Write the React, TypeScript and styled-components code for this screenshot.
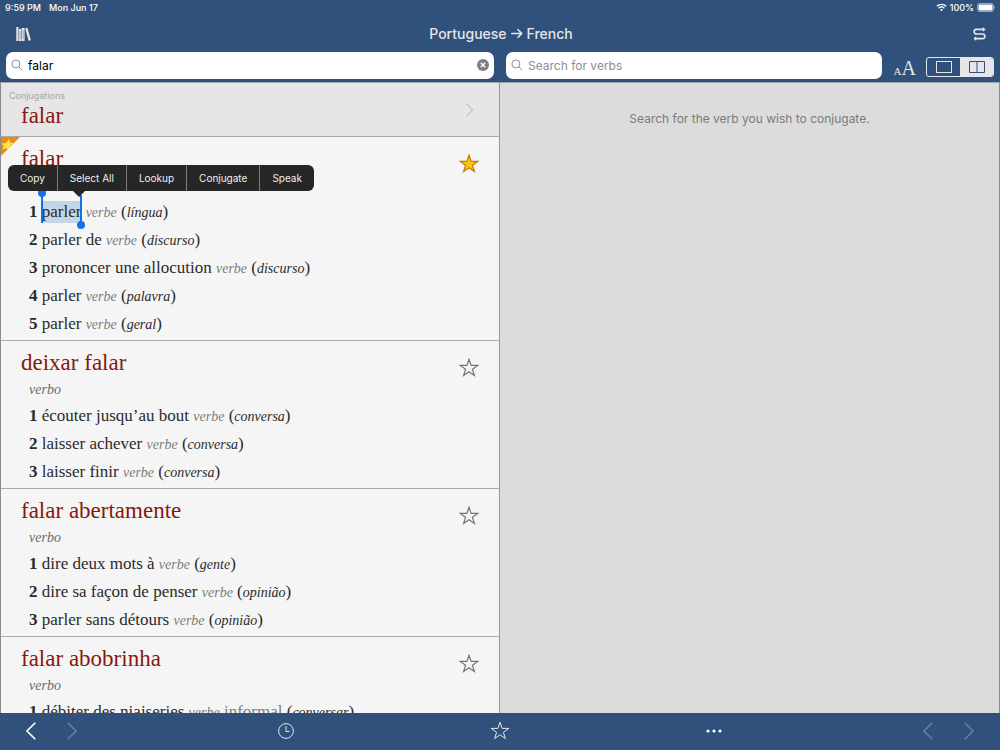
import React, { useState } from "react";
import styled, { createGlobalStyle } from "styled-components";

const blue = "#30517c";
const pale = "#e6e6e8";
const line = "#a9a9a9";
const grip = "#1670e8";
const sans = `Inter, "Liberation Sans", sans-serif`;
const serif = `"Liberation Serif", serif`;

const GlobalStyle = createGlobalStyle`
  *, *::before, *::after { box-sizing: border-box; }
  body { margin: 0; background: ${blue}; font-family: ${sans}; }
  button, input { font: inherit; color: inherit; border: 0; padding: 0; margin: 0; background: none; }
  button { cursor: pointer; }
  svg { display: block; flex: none; }
`;

const Page = styled.div`
  height: 100vh;
  display: flex;
  flex-direction: column;
  overflow: hidden;
`;

const Header = styled.header`
  background: ${blue};
  color: ${pale};
  flex: none;
`;

const StatusBar = styled.div`
  height: 15px;
  padding: 0 5px;
  display: flex;
  justify-content: space-between;
  font-size: 9px;
  line-height: 15px;
  font-weight: 500;
  color: #fff;
`;

const StatusGroup = styled.div<{ $gap: number }>`
  display: flex;
  align-items: center;
  gap: ${(p) => p.$gap}px;
`;

const NavBar = styled.nav`
  height: 37px;
  padding: 0 10px 0 12px;
  display: grid;
  grid-template-columns: 1fr auto 1fr;
  align-items: center;
`;

const Title = styled.h1`
  margin: 0;
  display: flex;
  align-items: center;
  gap: 4px;
  font-size: 14px;
  line-height: 20px;
  font-weight: 500;
`;

const IconButton = styled.button<{ $dim?: boolean; $align?: "start" | "end" }>`
  width: 22px;
  height: 24px;
  display: flex;
  align-items: center;
  justify-content: center;
  justify-self: ${(p) => p.$align ?? "center"};
  opacity: ${(p) => (p.$dim ? 0.25 : 1)};
`;

const SearchRow = styled.div`
  display: grid;
  grid-template-columns: 1fr 1fr;
  height: 30px;
`;

const SearchCell = styled.div`
  padding: 0 6px;
  display: flex;
  align-items: flex-start;
  min-width: 0;
`;

const SearchBox = styled.label`
  flex: 1;
  min-width: 0;
  height: 27px;
  padding: 0 5px 1px;
  display: flex;
  align-items: center;
  gap: 5px;
  border-radius: 7px;
  background: #fff;
  color: #8e8e93;

  input {
    flex: 1;
    min-width: 0;
    height: 20px;
    outline: 0;
    font-size: 12px;
    color: #000;
  }
  input::placeholder { color: #8e8e93; opacity: 1; }
`;

const TextSize = styled.button`
  margin: 6px 10px 0 12px;
  height: 20px;
  display: flex;
  align-items: baseline;
  font-family: ${serif};
  font-size: 20px;
  line-height: 20px;
  small { font-size: 11px; }
`;

const Segmented = styled.div`
  margin-top: 5px;
  display: flex;
  width: 68px;
  height: 20px;
  border: 1px solid ${pale};
  border-radius: 3px;
  overflow: hidden;
`;

const Segment = styled.button<{ $on?: boolean }>`
  flex: 1;
  display: flex;
  align-items: center;
  justify-content: center;
  color: ${(p) => (p.$on ? blue : pale)};
  background: ${(p) => (p.$on ? pale : "transparent")};
`;

const Main = styled.main`
  flex: 1;
  min-height: 0;
  display: grid;
  grid-template-columns: 1fr 1fr;
  border: 1px solid #8b8b8b;
  border-top-color: #a0a4aa;
  border-bottom: 0;
`;

const Results = styled.section`
  min-width: 0;
  overflow: hidden;
  background: #f5f5f5;
  border-right: 1px solid #999;
`;

const VerbPane = styled.section`
  min-width: 0;
  padding: 26px 12px;
  background: #dcdcdc;
  text-align: center;
  font-size: 12px;
  line-height: 20px;
  color: #7b7b7b;
  p { margin: 0; }
`;

const Headword = styled.h2`
  margin: 0;
  font-family: ${serif};
  font-size: 23px;
  line-height: 28px;
  font-weight: 400;
  color: #86190f;
`;

const ConjugationLink = styled.a`
  height: 54px;
  padding: 0 25px 0 8px;
  display: flex;
  align-items: center;
  justify-content: space-between;
  background: #e6e6e6;
  border-bottom: 1px solid ${line};
  text-decoration: none;
  color: #a5a5a5;
  font-size: 9px;
  line-height: 12px;
  ${Headword} { padding-left: 12px; }
`;

const Entry = styled.article`
  position: relative;
  padding: 8px 20px 2px;
  border-bottom: 1px solid ${line};
  font-family: ${serif};
  color: #2b2b2b;
`;

const EntryHead = styled.div`
  height: 28px;
  display: flex;
  justify-content: space-between;
`;

const StarButton = styled.button`
  height: 20px;
  margin-top: 9px;
`;

const WordClass = styled.p`
  margin: 0;
  padding-left: 8px;
  font-size: 14px;
  line-height: 25px;
  font-style: italic;
  color: #6b6b6b;
`;

const Senses = styled.ol`
  margin: 0;
  padding: 0 0 0 8px;
  list-style: none;
  font-size: 17px;
  line-height: 28px;
  white-space: nowrap;
`;

const Kind = styled.i`
  font-size: 14px;
  line-height: 1;
  color: #7c7c7c;
`;

const Register = styled.span`
  color: #7c7c7c;
`;

const Note = styled.i`
  font-size: 14px;
  line-height: 1;
`;

const Selected = styled.mark`
  position: relative;
  display: inline-block;
  height: 22px;
  line-height: 22px;
  color: inherit;
  background: #c4d5e6;
`;

const Grip = styled.span<{ $end?: boolean }>`
  position: absolute;
  width: 2px;
  height: 31px;
  background: ${grip};
  ${(p) => (p.$end ? "right: -1px; top: -6px;" : "left: -1px; bottom: 0;")}
  &::after {
    content: "";
    position: absolute;
    left: -3px;
    ${(p) => (p.$end ? "bottom: -3px;" : "top: -3px;")}
    width: 8px;
    height: 8px;
    border-radius: 50%;
    background: ${grip};
  }
`;

const EditMenu = styled.div`
  position: absolute;
  z-index: 2;
  top: 28px;
  left: 7px;
  display: flex;
  height: 26px;
  border-radius: 6px;
  background: #262626;
  color: #f0f0f0;
  font-family: ${sans};
  font-size: 10px;
  &::after {
    content: "";
    position: absolute;
    top: 25px;
    left: 64px;
    border: 7px solid transparent;
    border-top-color: #262626;
    border-bottom: 0;
  }
`;

const MenuItem = styled.button`
  padding: 0 12px;
  & + & { border-left: 1px solid #7b7b7b; }
`;

const Ribbon = styled.svg`
  position: absolute;
  top: 0;
  left: 0;
`;

const Toolbar = styled.footer`
  flex: none;
  height: 37px;
  padding-bottom: 1px;
  display: grid;
  grid-template-columns: 5fr 6fr 6fr 6fr 5fr;
  align-items: center;
  background: ${blue};
  color: #fff;
`;

const Pager = styled.div<{ $end?: boolean }>`
  display: flex;
  gap: 19px;
  padding: 0 20px;
  justify-self: ${(p) => (p.$end ? "end" : "start")};
`;

const starPath = "M10 1.2 12.1 7.4H18.8L13.4 11.3 15.4 17.6 10 13.8 4.6 17.6 6.6 11.3 1.2 7.4H7.9Z";

const Star = ({ fill = "none", stroke = "#757575", size = 20, width = 1.2 }) => (
  <svg width={size} height={size} viewBox="0 0 20 20" aria-hidden="true">
    <path d={starPath} fill={fill} stroke={stroke} strokeWidth={width} />
  </svg>
);

const Chevron = ({ left = false, width = 10, height = 18, stroke = 1.6 }) => (
  <svg width={width} height={height} viewBox="0 0 10 18" fill="none" stroke="currentColor" strokeWidth={stroke} aria-hidden="true">
    <path d={left ? "M9.3 .7 1 9l8.3 8.3" : "M.7 .7 9 9 .7 17.3"} />
  </svg>
);

const Magnifier = () => (
  <svg width="12" height="12" viewBox="0 0 12 12" fill="none" stroke="currentColor" strokeWidth="1" aria-hidden="true">
    <circle cx="4.9" cy="4.9" r="4" />
    <path d="M7.8 7.8 11.3 11.3" />
  </svg>
);

type Sense = { text: string; note: string; register?: string; selected?: boolean };
type EntryData = { word: string; starred?: boolean; senses: Sense[] };

const entries: EntryData[] = [
  {
    word: "falar",
    starred: true,
    senses: [
      { text: "parler", note: "língua", selected: true },
      { text: "parler de", note: "discurso" },
      { text: "prononcer une allocution", note: "discurso" },
      { text: "parler", note: "palavra" },
      { text: "parler", note: "geral" },
    ],
  },
  {
    word: "deixar falar",
    senses: [
      { text: "écouter jusqu’au bout", note: "conversa" },
      { text: "laisser achever", note: "conversa" },
      { text: "laisser finir", note: "conversa" },
    ],
  },
  {
    word: "falar abertamente",
    senses: [
      { text: "dire deux mots à", note: "gente" },
      { text: "dire sa façon de penser", note: "opinião" },
      { text: "parler sans détours", note: "opinião" },
    ],
  },
  {
    word: "falar abobrinha",
    senses: [{ text: "débiter des niaiseries", register: "informal", note: "conversar" }],
  },
];

const menuItems = ["Copy", "Select All", "Lookup", "Conjugate", "Speak"];

const EntryView = ({ entry }: { entry: EntryData }) => (
  <Entry>
    {entry.starred && (
      <Ribbon width="19" height="19" viewBox="0 0 19 19" aria-hidden="true">
        <path d="M0 0H19L0 19Z" fill="#e88d14" />
        <path d="M8.2 1.800 8.900 5.600 13 6.200 9.300 8.600 8.900 10.100 6.600 12.400 5 11 1.500 12.500 3.200 8.800 0 6.500 5 6.200Z" fill="#ffe94a" />
      </Ribbon>
    )}
    <EntryHead>
      <Headword>{entry.word}</Headword>
      <StarButton aria-label="Favorite">
        {entry.starred ? <Star fill="#fdc414" stroke="#c47a0c" /> : <Star />}
      </StarButton>
    </EntryHead>
    <WordClass>{entry.starred ? "\u00a0" : "verbo"}</WordClass>
    <Senses>
      {entry.senses.map((s, i) => (
        <li key={i}>
          <b>{i + 1}</b>{" "}
          {s.selected ? (
            <Selected>
              {s.text}
              <Grip />
              <Grip $end />
            </Selected>
          ) : (
            s.text
          )}{" "}
          <Kind>verbe</Kind> {s.register && <Register>{s.register} </Register>}(<Note>{s.note}</Note>)
        </li>
      ))}
    </Senses>
    {entry.starred && (
      <EditMenu role="menu">
        {menuItems.map((m) => (
          <MenuItem key={m} role="menuitem">{m}</MenuItem>
        ))}
      </EditMenu>
    )}
  </Entry>
);

export default function App() {
  const [query, setQuery] = useState("falar");
  return (
    <Page>
      <GlobalStyle />
      <Header>
        <StatusBar>
          <StatusGroup $gap={8}>
            <span>9:59 PM</span>
            <span>Mon Jun 17</span>
          </StatusGroup>
          <StatusGroup $gap={3}>
            <svg width="11" height="9" viewBox="0 0 11 9" fill="none" stroke="#fff" strokeWidth="1.4" aria-hidden="true">
              <path d="M.8 3.3C3.5 .7 7.5 .7 10.2 3.3M2.6 5.2C4.3 3.6 6.7 3.6 8.4 5.2" />
              <path d="M5.5 8.2 4 6.6Q5.5 5.4 7 6.6Z" fill="#fff" stroke="none" />
            </svg>
            <span>100%</span>
            <svg width="18" height="9" viewBox="0 0 18 9" aria-hidden="true">
              <rect x=".5" y=".5" width="16" height="8" rx="2" fill="none" stroke="#fff" strokeOpacity=".5" />
              <rect x="1.5" y="1.5" width="14" height="6" rx="1" fill="#fff" />
              <path d="M17.2 3v3q.8-.5 .8-1.5T17.2 3Z" fill="#fff" fillOpacity=".5" />
            </svg>
          </StatusGroup>
        </StatusBar>
        <NavBar>
          <IconButton $align="start" aria-label="Dictionaries">
            <svg width="15" height="14" viewBox="0 0 15 14" fill="currentColor" aria-hidden="true">
              <path d="M.3 0H2.5V14H.3ZM3 2H5.2V14H3ZM5.7 1H8.6V14H5.7ZM9.2 1.4 11.4 .8 14.9 13.2 12.6 13.8Z" />
              <path d="M4.1 4V12M7.2 3V12" stroke={blue} strokeWidth=".4" />
            </svg>
          </IconButton>
          <Title>
            Portuguese
            <svg width="12" height="11" viewBox="0 0 12 11" fill="none" stroke="currentColor" strokeWidth="1.6" aria-hidden="true">
              <path d="M.8 5.5H10.8M7 1.7 10.8 5.5 7 9.3" strokeLinecap="round" strokeLinejoin="round" />
            </svg>
            French
          </Title>
          <IconButton $align="end" aria-label="Swap languages">
            <svg width="13" height="14" viewBox="0 0 13 14" fill="none" stroke="currentColor" strokeWidth="1.6" aria-hidden="true">
              <path d="M10.5 2.4H3.4A2.3 2.3 0 0 0 3.4 7H9.6A2.3 2.3 0 0 1 9.6 11.6H2.5" />
              <path d="M9.8 0 12.6 2.4 9.8 4.8ZM3.2 9.2 .4 11.6 3.2 14Z" fill="currentColor" stroke="none" />
            </svg>
          </IconButton>
        </NavBar>
        <SearchRow>
          <SearchCell>
            <SearchBox>
              <Magnifier />
              <input type="text" aria-label="Search" value={query} onChange={(e) => setQuery(e.target.value)} />
              <button type="button" aria-label="Clear" onClick={() => setQuery("")}>
                <svg width="12" height="12" viewBox="0 0 12 12" aria-hidden="true">
                  <circle cx="6" cy="6" r="6" fill="#808084" />
                  <path d="M3.8 3.8 8.2 8.2M8.2 3.8 3.8 8.2" stroke="#fff" strokeWidth="1.4" />
                </svg>
              </button>
            </SearchBox>
          </SearchCell>
          <SearchCell>
            <SearchBox>
              <Magnifier />
              <input type="text" aria-label="Search for verbs" placeholder="Search for verbs" />
            </SearchBox>
            <TextSize aria-label="Text size">
              <small>A</small>A
            </TextSize>
            <Segmented>
              <Segment aria-label="Single pane">
                <svg width="16" height="12" viewBox="0 0 16 12" fill="none" stroke="currentColor" aria-hidden="true">
                  <rect x=".5" y=".5" width="15" height="11" />
                </svg>
              </Segment>
              <Segment $on aria-label="Two panes">
                <svg width="16" height="12" viewBox="0 0 16 12" fill="none" stroke="currentColor" aria-hidden="true">
                  <path d="M.5 .5H15.5V11.5H.5ZM8 .5V11.5" />
                </svg>
              </Segment>
            </Segmented>
          </SearchCell>
        </SearchRow>
      </Header>
      <Main>
        <Results>
          <ConjugationLink href="#conjugations">
            <div>
              Conjugations
              <Headword>falar</Headword>
            </div>
            <Chevron width={9} height={14} stroke={1.2} />
          </ConjugationLink>
          {entries.map((e) => (
            <EntryView key={e.word} entry={e} />
          ))}
        </Results>
        <VerbPane>
          <p>Search for the verb you wish to conjugate.</p>
        </VerbPane>
      </Main>
      <Toolbar>
        <Pager>
          <IconButton aria-label="Back"><Chevron left /></IconButton>
          <IconButton $dim aria-label="Forward"><Chevron /></IconButton>
        </Pager>
        <IconButton aria-label="History">
          <svg width="16" height="16" viewBox="0 0 16 16" fill="none" stroke={pale} aria-hidden="true">
            <circle cx="8" cy="8" r="7.4" />
            <path d="M8 3V8.5H11.5" />
          </svg>
        </IconButton>
        <IconButton aria-label="Favorites"><Star stroke={pale} width={1} /></IconButton>
        <IconButton aria-label="More">
          <svg width="16" height="4" viewBox="0 0 16 4" fill="currentColor" aria-hidden="true">
            <circle cx="2" cy="2" r="1.6" />
            <circle cx="8" cy="2" r="1.6" />
            <circle cx="14" cy="2" r="1.6" />
          </svg>
        </IconButton>
        <Pager $end>
          <IconButton $dim aria-label="Previous verb"><Chevron left /></IconButton>
          <IconButton $dim aria-label="Next verb"><Chevron /></IconButton>
        </Pager>
      </Toolbar>
    </Page>
  );
}
